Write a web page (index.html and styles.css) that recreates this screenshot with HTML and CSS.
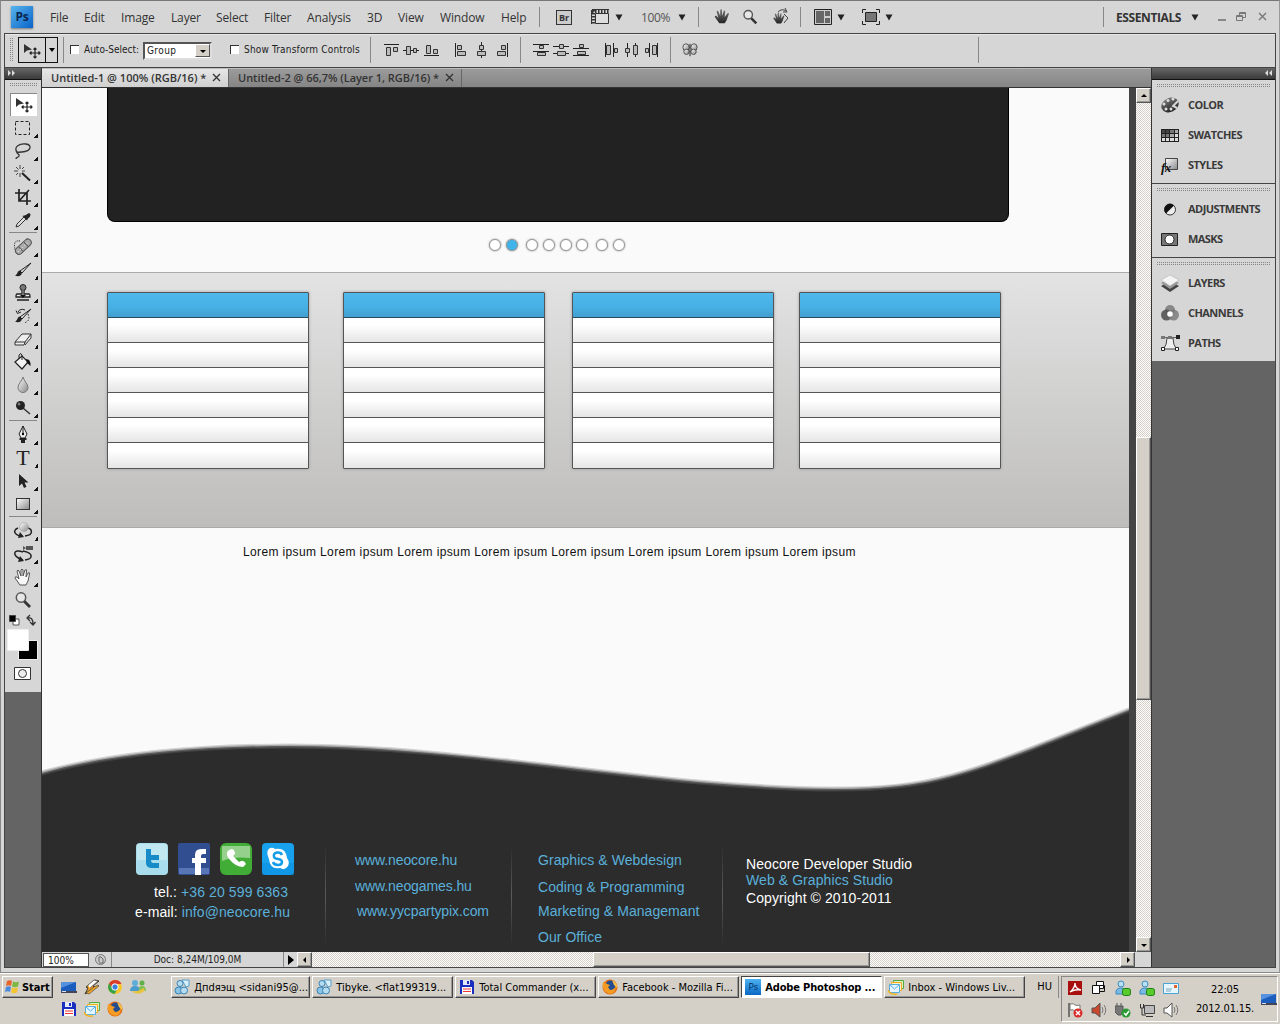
FILE: index.html
```html
<!DOCTYPE html>
<html lang="en">
<head>
<meta charset="utf-8">
<title>Adobe Photoshop</title>
<link rel="stylesheet" href="styles.css">
</head>
<body>
<svg class="defs" aria-hidden="true">
  <defs>
    <linearGradient id="metal" x1="0" y1="0" x2="1" y2="1"><stop offset="0" stop-color="#fff"/><stop offset="1" stop-color="#888"/></linearGradient>
    <linearGradient id="dark" x1="0" y1="0" x2="0" y2="1"><stop offset="0" stop-color="#777"/><stop offset="1" stop-color="#222"/></linearGradient>
  </defs>
  <symbol id="move" viewBox="0 0 20 20"><path d="M2 3v9l3-2.500 5-1z" fill="#333"/><path d="M13 7v10M8 12h10M11.500 8.500 13 7l1.500 1.500M11.500 15.500 13 17l1.500-1.500M9.500 10.500 8 12l1.500 1.500M16.500 10.500 18 12l-1.500 1.500" fill="none" stroke="#222" stroke-width="1.200"/></symbol>
  <symbol id="marquee" viewBox="0 0 20 20"><rect x="2.500" y="3.500" width="14" height="13" fill="none" stroke="#222" stroke-dasharray="3 2"/></symbol>
  <symbol id="lasso" viewBox="0 0 20 20"><path d="M4 11C0 6 7 2 13 3s5 6-1 7.500-9 0-8 1.500 3 1 2 3-3 1-3 3" fill="none" stroke="#333" stroke-width="1.300"/></symbol>
  <symbol id="wand" viewBox="0 0 20 20"><path d="M9 9l8 7.500" stroke="#222" stroke-width="2"/><path d="M7 1v4M7 9v4M1 7h4M9 7h3M3 3l2.500 2.500M11 3 9 5M3 11l2-2" stroke="#444"/></symbol>
  <symbol id="crop" viewBox="0 0 20 20"><path d="M6 2v12h12M2 6h12v12M6 14 16 3" fill="none" stroke="#222" stroke-width="1.700"/></symbol>
  <symbol id="dropper" viewBox="0 0 20 20"><path d="M3 17l1-3 7-7 2 2-7 7z" fill="#ddd" stroke="#333"/><path d="M9.500 6l4.500 4.500 1-2c4-2 3-8-2-3.500z" fill="#222"/></symbol>
  <symbol id="heal" viewBox="0 0 20 20"><path d="M7 4q-6-1-5.500 5T4 14" fill="none" stroke="#111" stroke-dasharray="1 1"/><g transform="rotate(-43 10 10)"><rect x="1" y="6.500" width="19" height="7" rx="3.500" fill="#aaa" stroke="#555"/><path d="M7 7v6m7-6v6" stroke="#555"/><path d="M3 10h15" stroke="#eee" stroke-dasharray="1 2"/></g></symbol>
  <symbol id="brush" viewBox="0 0 20 20"><path d="M18 3 9 13l-2-2z" fill="#ddd" stroke="#222"/><path d="M7 10.500c-3 0-2 4-5 5 3 1.500 7 .5 7-3z" fill="#222"/></symbol>
  <symbol id="stamp" viewBox="0 0 20 20"><circle cx="10" cy="4.500" r="3" fill="#777" stroke="#222"/><path d="M9 7v4H4q-1 0-1 3h14q0-3-1-3h-5V7M4 17h12" fill="#eee" stroke="#222" stroke-width="1.300"/><path d="M7 12h6l-3 3z" fill="#111"/></symbol>
  <symbol id="history" viewBox="0 0 20 20"><path d="M18 3 9 13l-2-2z" fill="#ddd" stroke="#222"/><path d="M7 10.500c-3 0-2 4-5 5 3 1.500 7 .5 7-3z" fill="#222"/><path d="M12 4Q7 2 5 6M3 4.500l1.500 3L8 6" fill="none" stroke="#222"/><path d="M15 8q3 7-4 9" fill="none" stroke="#222" stroke-dasharray="1.500 1.500"/></symbol>
  <symbol id="eraser" viewBox="0 0 20 20"><path d="M2 13 9 5h9l-6 8zM2 13v3h9l1-3M12 16l6-7V5" fill="#eee" stroke="#333"/></symbol>
  <symbol id="bucket" viewBox="0 0 20 20"><path d="M2 10 9 4l6 6-6 7z" fill="#f4f4f4" stroke="#222" stroke-width="1.200"/><path d="M13 7q5 0 4.500 7L14 11z" fill="#111"/><path d="M6 7V3q2-3 3 0v5" fill="none" stroke="#222"/></symbol>
  <symbol id="drop" viewBox="0 0 20 20"><path d="M10 2c1 4 5 7 5 10.500a5 5 0 0 1-10 0C5 9 9 6 10 2z" fill="url(#metal)" stroke="#777"/></symbol>
  <symbol id="dodge" viewBox="0 0 20 20"><path d="m10 10 7 6" stroke="#333" stroke-width="1.500"/><circle cx="7.500" cy="7.500" r="4.500" fill="#222"/><circle cx="6" cy="6" r="1.500" fill="#777"/></symbol>
  <symbol id="pen" viewBox="0 0 20 20"><path d="M10 1v8M10 1 6 9l2 4h4l2-4z" fill="#eee" stroke="#222"/><circle cx="10" cy="9" r="1.200"/><path d="M6.500 13h7v2h-7zM8 15h4v3H8z" fill="#222"/></symbol>
  <symbol id="select" viewBox="0 0 20 20"><path d="M6 3v12l3-2.500 2 4.500 2.500-1.200-2-4.300h4z" fill="#222"/></symbol>
  <symbol id="shape" viewBox="0 0 20 20"><rect x="3.500" y="4.500" width="13" height="11" fill="url(#metal)" stroke="#333"/></symbol>
  <symbol id="rot3d" viewBox="0 0 20 20"><path d="M5 7C-2 10 3 15 10 15m2 0c9-1 7-7 3-8" fill="none" stroke="#222" stroke-width="1.500"/><path d="m7 11 4 5-6 1z" fill="#222"/><circle cx="11" cy="6" r="4.500" fill="url(#metal)" stroke="#999" stroke-width=".5"/></symbol>
  <symbol id="cam3d" viewBox="0 0 20 20"><path d="M10 8C0 4-2 12 10 16m2 0c8-1 9-7-2-9" fill="none" stroke="#222" stroke-width="1.500"/><path d="m7 12 4 5-6 1z" fill="#222"/><path d="M13 2h7v4h-7zm0 2-3-2v4z" fill="#555"/></symbol>
  <symbol id="hand" viewBox="0 0 20 20"><path d="M7 18 2 11q0-2 2-1l2 2-2-8q1-2 2 0l2 5V3q1-2 2 0v6l2-6q2-1 1.500 1L13 10l2-4q2-1 1.500 1L15 14l-2 4z" fill="#f7f7f7" stroke="#555"/></symbol>
  <symbol id="handdark" viewBox="0 0 20 20"><path d="M7 17 2 10q0-2 2-1l2 2-2-7q1-2 2 0l2 5V2q1-1 2 0v7l2-6q2-1 1.500 1L13 10l3-4q2-1 1.500 1L15 14l-2 3z" fill="url(#dark)"/></symbol>
  <symbol id="zoom" viewBox="0 0 20 20"><path d="m11 11 6 6" stroke="#333" stroke-width="2.800"/><circle cx="8" cy="7.500" r="4.700" fill="#e7e7e7" stroke="#555" stroke-width="1.500"/></symbol>
  <symbol id="down" viewBox="0 0 8 8"><path d="M.5 1.500h7L4 7.500z" fill="#222"/></symbol>
  <symbol id="al-top" viewBox="0 0 16 16"><path d="M1 2.500h15" stroke="#222"/><path d="M3.500 5.500h4v8h-4zM10.500 5.500h4v4h-4z" fill="#bbb" stroke="#333"/></symbol>
  <symbol id="al-mid" viewBox="0 0 16 16"><path d="M0 8.500h16" stroke="#222"/><path d="M3.500 4.500h4v8h-4zM10.500 6.500h3v4h-3z" fill="#bbb" stroke="#333"/></symbol>
  <symbol id="al-bot" viewBox="0 0 16 16"><path d="M1 13.500h15" stroke="#222"/><path d="M3.500 3.500h4v8h-4zM10.500 7.500h4v4h-4z" fill="#bbb" stroke="#333"/></symbol>
  <symbol id="al-left" viewBox="0 0 16 16"><path d="M2.500 1v14" stroke="#222"/><path d="M4.500 3.500h4v4h-4zM4.500 9.500h8v4h-8z" fill="#bbb" stroke="#333"/></symbol>
  <symbol id="al-cen" viewBox="0 0 16 16"><path d="M8.500 0v16" stroke="#222"/><path d="M6.500 3.500h4v4h-4zM4.500 9.500h8v4h-8z" fill="#bbb" stroke="#333"/></symbol>
  <symbol id="al-right" viewBox="0 0 16 16"><path d="M13.500 1v14" stroke="#222"/><path d="M7.500 3.500h4v4h-4zM3.500 9.500h8v4h-8z" fill="#bbb" stroke="#333"/></symbol>
  <symbol id="ds-top" viewBox="0 0 16 16"><path d="M0 2.500h16M0 9.500h16" stroke="#222"/><path d="M6.500 3.500h4v3h-4zM4.500 10.500h8v3h-8z" fill="#bbb" stroke="#333"/></symbol>
  <symbol id="ds-mid" viewBox="0 0 16 16"><path d="M0 4.500h16M0 11.500h16" stroke="#222"/><path d="M6.500 2.500h4v4h-4zM4.500 9.500h8v4h-8z" fill="#bbb" stroke="#333"/></symbol>
  <symbol id="ds-bot" viewBox="0 0 16 16"><path d="M0 6.500h16M0 13.500h16" stroke="#222"/><path d="M6.500 2.500h4v3h-4zM4.500 9.500h8v3h-8z" fill="#bbb" stroke="#333"/></symbol>
  <symbol id="dots-left" viewBox="0 0 16 16"><path d="M2.500 1v14M10.500 1v14" stroke="#222"/><path d="M3.500 3.500h4v9h-4zM11.500 6.500h3v4h-3z" fill="#bbb" stroke="#333"/></symbol>
  <symbol id="dots-cen" viewBox="0 0 16 16"><path d="M3.500 1v14M11.500 1v14" stroke="#222"/><path d="M1.500 6.500h4v4h-4zM9.500 3.500h4v9h-4z" fill="#bbb" stroke="#333"/></symbol>
  <symbol id="dots-right" viewBox="0 0 16 16"><path d="M5.500 1v14M13.500 1v14" stroke="#222"/><path d="M1.500 6.500h3v4h-3zM8.500 3.500h4v9h-4z" fill="#bbb" stroke="#333"/></symbol>
  <symbol id="auto" viewBox="0 0 18 16"><ellipse cx="4.500" cy="5" rx="3.500" ry="4" fill="url(#metal)" stroke="#444"/><ellipse cx="13.500" cy="5" rx="3.500" ry="4" fill="url(#metal)" stroke="#444"/><ellipse cx="5" cy="10" rx="3" ry="3" fill="url(#metal)" stroke="#444"/><ellipse cx="13" cy="10" rx="3" ry="3" fill="url(#metal)" stroke="#444"/><path d="M9 1v14" stroke="#111"/></symbol>
  <symbol id="msn" viewBox="0 0 16 16"><path d="M8 1h7v6l-3 1z" fill="#d8effa" stroke="#589fc8"/><circle cx="6" cy="4.500" r="3" fill="#b6dcf1" stroke="#3982b4"/><circle cx="4.500" cy="11.500" r="3.500" fill="#8bc4e5" stroke="#3982b4"/><circle cx="10" cy="11.500" r="3.500" fill="#b6dcf1" stroke="#3982b4"/></symbol>
  <symbol id="save" viewBox="0 0 16 16"><path d="M1 1h12l2 2v12H1z" fill="#1a2fc0"/><path d="M4 1h7v5H4z" fill="#e4e8fa"/><path d="M8 2h2v3H8z" fill="#1a2fc0"/><path d="M3 8h10v7H3z" fill="#fff"/><path d="M4 10h8m-8 2.500h8" stroke="#e33"/></symbol>
  <symbol id="fox" viewBox="0 0 16 16"><circle cx="8" cy="8" r="7.500" fill="#e56b10"/><circle cx="8.500" cy="6.500" r="5" fill="#244d91"/><path d="M1 3q3 1 4 2l3 1-2 2 2 3q4 0 6-4 0 7-6 8Q-1 13 1 3z" fill="#f49c23"/><path d="M10 1q6 3 5 8l-3-3z" fill="#f6c34a"/></symbol>
  <symbol id="mail" viewBox="0 0 16 16"><path d="M5.500 1.500h10v8h-10z" fill="#d9f3c2" stroke="#54a940"/><path d="M3.500 3.500h10v8h-10z" fill="#fff3c4" stroke="#f2a922"/><path d="M1.500 5.500h10v8h-10z" fill="#e5f5ff" stroke="#59aee0"/><path d="m2 6 4.500 4L11 6" fill="none" stroke="#59aee0"/><path d="M0 11q2 5 9 4" fill="none" stroke="#f2b522" stroke-width="1.500"/></symbol>
  <symbol id="desktop" viewBox="0 0 16 16"><path d="M0 3h15v10H0z" fill="#1b5dbd"/><path d="M0 3h15L0 9z" fill="#5591dd"/><path d="M0 12h16v2H0z" fill="#445"/><path d="M1 12h4v1H1z" fill="#dde"/></symbol>
  <symbol id="bolt" viewBox="0 0 16 16"><path d="M11 1 2 8l2 1-3 6 10-7-2-1 6-5z" fill="#f5a623" stroke="#333"/><path d="m4 6 6-5 4 1-8 7" fill="#fff" stroke="#444" stroke-width=".7"/><path d="m10 8 4-2 1 1-10 8-3-1z" fill="#f5a623" stroke="#444" stroke-width=".7"/></symbol>
  <symbol id="chrome" viewBox="0 0 16 16"><circle cx="8" cy="8" r="7" fill="#f6c62b"/><path d="M2 4.500A7 7 0 0 1 14.500 5H8L5 9.500z" fill="#dc3c2c"/><path d="M2 4.500A7 7 0 0 0 7.500 15l3-5H6z" fill="#36a347"/><circle cx="8" cy="8" r="3.200" fill="#3b80dc" stroke="#fff"/></symbol>
  <symbol id="people" viewBox="0 0 16 16"><circle cx="5" cy="4" r="3" fill="#5daed9"/><circle cx="12" cy="4" r="2.500" fill="#60b04a"/><path d="M0 12q0-5 5-5t6 5z" fill="#4a9ccf"/><path d="M9 12q-1-5 3-5t4 5z" fill="#7fc054"/><path d="M1 12q8 6 14-1l-2-2q-4 4-12 3z" fill="#e7c33e"/></symbol>
  <symbol id="buddy" viewBox="0 0 16 16"><circle cx="6" cy="4" r="3" fill="#b9dff5" stroke="#3b8bc0"/><path d="M1 14q-1-6 5-6t5 6z" fill="#79b9e2" stroke="#3b8bc0"/><rect x="7.500" y="8.500" width="8" height="7" rx="2" fill="#58cc2c" stroke="#1c7d14"/></symbol>
  <symbol id="speaker" viewBox="0 0 16 16"><path d="M1 6h3l5-5v14l-5-4H1z" stroke="#555"/><path d="M11 5q2 3 0 6m2-8q3.500 5 0 10" fill="none" stroke="#777"/></symbol>
</svg>

<div class="window">
  <div class="menubar">
    <span class="logo">Ps</span>
    <span>File</span><span>Edit</span><span>Image</span><span>Layer</span><span>Select</span><span>Filter</span><span>Analysis</span><span>3D</span><span>View</span><span>Window</span><span>Help</span>
    <i class="vsep"></i>
    <span class="bridge">Br</span>
    <svg width="19" height="16"><path d="M4.500 4.500h13v10h-13z" fill="#ddd" stroke="#333"/><path d="M1 .5h17M.5 1v14" stroke="#333"/><path d="M1 2.500h17M2.500 1v14" stroke="#333" stroke-width="3" stroke-dasharray="1.500 1.500"/></svg>
    <svg class="arrow"><use href="#down"/></svg>
    <span class="zoomlevel">100%</span>
    <svg class="arrow"><use href="#down"/></svg>
    <i class="vsep"></i>
    <svg width="18" height="18"><use href="#handdark"/></svg>
    <svg width="18" height="18"><use href="#zoom"/></svg>
    <svg width="18" height="18"><use href="#handdark" x="0" y="3" width="14" height="15"/><path d="M6 4q4-4 8-1m-1-3 2 4-4 0M12 6l4 4-4 5" fill="none" stroke="#444"/></svg>
    <i class="vsep"></i>
    <svg width="18" height="16"><path d="M.5.500h17v15H.5z" fill="#ccc" stroke="#222"/><path d="M2 2h8v12H2zM11 2h5v5h-5zM11 9h5v5h-5z" fill="#666"/></svg>
    <svg class="arrow"><use href="#down"/></svg>
    <svg width="18" height="16"><path d="M.5 4V.5H4M14 .5h3.500V4M.5 12v3.500H4M14 15.500h3.500V12" fill="none" stroke="#222"/><path d="M3.500 3.500h11v9h-11z" fill="#777" stroke="#222"/></svg>
    <svg class="arrow"><use href="#down"/></svg>
    <i class="vsep"></i>
    <b class="workspace">ESSENTIALS</b>
    <svg class="arrow"><use href="#down"/></svg>
    <svg width="10" height="12"><path d="M1 9h8" stroke="#888" stroke-width="2"/></svg>
    <svg width="11" height="12"><path d="M3.500 4V1.500h6v5H7M3.500 2.500h6M.5 4.500h6v5h-6zM.5 5.500h6" fill="none" stroke="#777"/></svg>
    <svg width="11" height="12"><path d="m2 2 7 7M9 2 2 9" stroke="#777" stroke-width="1.400"/></svg>
  </div>

  <div class="options">
    <i class="grip-v"></i>
    <div class="preset"><svg width="26" height="26" viewBox="-3 -3 26 26"><use href="#move" width="20" height="20"/></svg><svg width="12" height="24"><path d="M3 10h6l-3 4z"/></svg></div>
    <i class="vsep"></i>
    <i class="check"></i><span class="auto">Auto-Select:</span>
    <div class="dropdown"><span>Group</span><b><svg width="8" height="8"><path d="M1 3h6L4 6z"/></svg></b></div>
    <i class="check"></i><span class="transform">Show Transform Controls</span>
    <i class="vsep"></i>
    <svg><use href="#al-top"/></svg><svg><use href="#al-mid"/></svg><svg><use href="#al-bot"/></svg><svg><use href="#al-left"/></svg><svg><use href="#al-cen"/></svg><svg><use href="#al-right"/></svg>
    <i class="vsep"></i>
    <svg><use href="#ds-top"/></svg><svg><use href="#ds-mid"/></svg><svg><use href="#ds-bot"/></svg><svg><use href="#dots-left"/></svg><svg><use href="#dots-cen"/></svg><svg><use href="#dots-right"/></svg>
    <i class="vsep"></i>
    <svg><use href="#auto"/></svg>
    <i class="vsep"></i>
  </div>

  <div class="work">
    <div class="tools">
      <div class="bar"><svg width="9" height="7"><path d="M1 0v6l3-3zM5 0v6l3-3z" fill="#ddd"/></svg></div>
      <div class="toolbox">
        <i class="grip-h"></i>
        <div class="tool active"><svg><use href="#move"/></svg></div>
        <div class="tool more"><svg><use href="#marquee"/></svg></div>
        <div class="tool more"><svg><use href="#lasso"/></svg></div>
        <div class="tool more"><svg><use href="#wand"/></svg></div>
        <div class="tool more"><svg><use href="#crop"/></svg></div>
        <div class="tool more"><svg><use href="#dropper"/></svg></div>
        <hr>
        <div class="tool more"><svg><use href="#heal"/></svg></div>
        <div class="tool more"><svg><use href="#brush"/></svg></div>
        <div class="tool more"><svg><use href="#stamp"/></svg></div>
        <div class="tool more"><svg><use href="#history"/></svg></div>
        <div class="tool more"><svg><use href="#eraser"/></svg></div>
        <div class="tool more"><svg><use href="#bucket"/></svg></div>
        <div class="tool more"><svg><use href="#drop"/></svg></div>
        <div class="tool more"><svg><use href="#dodge"/></svg></div>
        <hr>
        <div class="tool more"><svg><use href="#pen"/></svg></div>
        <div class="tool more type">T</div>
        <div class="tool more"><svg><use href="#select"/></svg></div>
        <div class="tool more"><svg><use href="#shape"/></svg></div>
        <hr>
        <div class="tool more"><svg><use href="#rot3d"/></svg></div>
        <div class="tool more"><svg><use href="#cam3d"/></svg></div>
        <div class="tool more"><svg><use href="#hand"/></svg></div>
        <div class="tool"><svg><use href="#zoom"/></svg></div>
        <svg class="swatches" width="36" height="81" viewBox="5 611 36 81"><path d="M13 619h6v6h-6z" fill="#fff" stroke="#555"/><path d="M9.500 615.500h6v6h-6z" stroke="#444"/><path d="M28 618q5-1 5 6M30 615l-3 3 3 3M30 622l3 3 2.500-3" fill="none" stroke="#333" stroke-width="1.300"/><path d="M18.500 640.500h19v19h-19z" stroke="#eee"/><path d="M7.500 629.500h21v21h-21z" fill="#fff" stroke="#eee"/><path d="M14.500 667.500h16v12h-16z" fill="#fff" stroke="#333"/><circle cx="22.500" cy="673.500" r="4" fill="#eee" stroke="#333"/></svg>
      </div>
    </div>

    <div class="center">
      <div class="tabs">
        <div class="tab current"><span>Untitled-1 @ 100% (RGB/16) *</span><svg width="9" height="9"><path d="m1 1 7 7M8 1 1 8" stroke="#333" stroke-width="1.300"/></svg></div>
        <div class="tab second"><span>Untitled-2 @ 66,7% (Layer 1, RGB/16) *</span><svg width="9" height="9"><path d="m1 1 7 7M8 1 1 8" stroke="#333" stroke-width="1.300"/></svg></div>
      </div>
      <div class="view">
        <div class="page">
          <div class="banner"></div>
          <div class="pager"><i></i><i class="on"></i><i class="gap"></i><i></i><i></i><i></i><i class="gap"></i><i></i></div>
          <div class="band">
            <div class="list"><b></b><i></i><i></i><i></i><i></i><i></i><i></i></div>
            <div class="list"><b></b><i></i><i></i><i></i><i></i><i></i><i></i></div>
            <div class="list"><b></b><i></i><i></i><i></i><i></i><i></i><i></i></div>
            <div class="list"><b></b><i></i><i></i><i></i><i></i><i></i><i></i></div>
          </div>
          <p class="lorem">Lorem ipsum Lorem ipsum Lorem ipsum Lorem ipsum Lorem ipsum Lorem ipsum Lorem ipsum Lorem ipsum</p>
          <svg class="wave" width="1087" height="100"><path d="M0 73C70 53 160 46 248 46C430 46 620 89 793 89C900 89 930 72 1087 10V100H0z" fill="#2c2c2c"/><g fill="none" stroke="#777"><path d="M-4 74C70 53 160 46 248 46C430 46 620 89 793 89C900 89 930 72 1092 8" stroke-opacity=".3" stroke-width="5"/><path d="M-4 74C70 53 160 46 248 46C430 46 620 89 793 89C900 89 930 72 1092 8" stroke-opacity=".5" stroke-width="2.500"/></g></svg>
          <div class="footer">
            <div class="contact">
              <div class="social">
                <svg viewBox="0 0 32 32"><rect width="32" height="32" rx="4" fill="#a9dcec"/><path d="M1 1h30v16H1z" fill="#d2eef5" opacity=".6"/><path d="M10 6v14q0 5 6 5h7v-5h-6q-2 0-2-3h8v-5h-8V6z" fill="#168bc8"/></svg>
                <svg viewBox="0 0 32 32"><rect width="32" height="32" rx="2" fill="#314e91"/><path d="M1 25h30v6H1z" fill="#5876b6"/><path d="M17 32V20h-3v-5h3v-3q0-6 6-6h5v5h-3q-2 0-2 2v2h5v5h-5v12z" fill="#fff"/></svg>
                <svg viewBox="0 0 32 32"><rect width="32" height="32" rx="6" fill="#42ad36"/><path d="M2 3h28v12Q14 13 2 18z" fill="#b2dcaa" opacity=".75"/><path d="M9 7q-5 3 1 10t13 7l3-3q-2-4-5-3l-2 1-6-6 2-2q0-4-3-5z" fill="#fff"/></svg>
                <svg viewBox="0 0 32 32"><rect width="32" height="32" rx="4" fill="#18a1ed"/><path d="M0 20h32v12H0z" fill="#078ddd" opacity=".5"/><path d="M8 5q3-1 5 1 11-2 12 9 3 4 1 8-3 5-8 2Q8 27 7 16 3 8 8 5z" fill="#fff"/><path d="M20 12q-1-3-5-2.500-4 1-3 4 0 2 4 2.500t4 3q0 3-4 3t-5-3" fill="none" stroke="#159ce8" stroke-width="2.500"/></svg>
              </div>
              <p class="tel">tel.: <a>+36 20 599 6363</a></p>
              <p class="email">e-mail: <a>info@neocore.hu</a></p>
            </div>
            <i class="rule"></i>
            <div class="sites"><a>www.neocore.hu</a><a>www.neogames.hu</a><a class="third">www.yycpartypix.com</a></div>
            <i class="rule"></i>
            <div class="services"><a>Graphics &amp; Webdesign</a><a>Coding &amp; Programming</a><a>Marketing &amp; Managemant</a><a>Our Office</a></div>
            <i class="rule"></i>
            <div class="about"><span>Neocore Developer Studio</span><a>Web &amp; Graphics Studio</a><span>Copyright © 2010-2011</span></div>
          </div>
        </div>
        <div class="scroll-v"><i class="btn"><svg width="8" height="8"><path d="M1 5h6L4 2z"/></svg></i><i class="thumb"></i><i class="btn"><svg width="8" height="8"><path d="M1 3h6L4 6z"/></svg></i></div>
      </div>
      <div class="status">
        <span class="pct">100%</span>
        <span class="info"><svg width="13" height="13"><circle cx="6.500" cy="6.500" r="5" fill="#ccc" stroke="#777"/><path d="M5 9V4h2l2 2v4H5" fill="none" stroke="#666"/></svg></span>
        <span class="doc">Doc: 8,24M/109,0M</span>
        <span class="play"><svg width="8" height="12"><path d="M1 1v10l6-5z"/></svg></span>
        <i class="btn"><svg width="8" height="8"><path d="M5 1v6L2 4z"/></svg></i>
        <div class="track"><i class="thumb"></i></div>
        <i class="btn"><svg width="8" height="8"><path d="M3 1v6l3-3z"/></svg></i>
      </div>
    </div>

    <div class="panels">
      <div class="bar"><svg width="9" height="7"><path d="M4 0v6L1 3zM8 0v6L5 3z" fill="#ddd"/></svg></div>
      <div class="group"><i class="grip-h"></i>
        <div class="item"><svg><ellipse cx="10" cy="10" rx="9" ry="7" fill="url(#dark)" transform="rotate(-25 10 10)"/><path d="m18 6-5 5 4 2" fill="none" stroke="#d6d6d6" stroke-width="2"/><g fill="#ddd"><circle cx="4" cy="9" r="1.500"/><circle cx="8" cy="5.500" r="1.500"/><circle cx="13" cy="4" r="1.500"/><circle cx="6" cy="14" r="1.500"/><circle cx="11" cy="14" r="1.500"/></g></svg><span>COLOR</span></div>
        <div class="item"><svg><path d="M1 4h18v13H1z" fill="#222"/><path d="M2 5h3v3H2zM6 5h3v3H6z" fill="#444"/><path d="M10 5h4v3h-4zM2 9h3v3H2zM6 9h3v3H6z" fill="#777"/><path d="M15 5h3v3h-3zM10 9h4v3h-4z" fill="#aaa"/><path d="M15 9h3v3h-3zM2 13h3v3H2zM6 13h3v3H6zM10 13h4v3h-4zM15 13h3v3h-3z" fill="#ddd"/></svg><span>SWATCHES</span></div>
        <div class="item"><svg><path d="M5.500 3.500h12v11h-12z" fill="url(#metal)" stroke="#444"/><text class="fx" x="1" y="17">fx</text></svg><span>STYLES</span></div>
      </div>
      <div class="group"><i class="grip-h"></i>
        <div class="item"><svg><circle cx="10" cy="10.500" r="5.500" fill="#eee" stroke="#333"/><path d="M6 14.500A5.500 5.500 0 0 1 14 6.500z" fill="#111"/></svg><span>ADJUSTMENTS</span></div>
        <div class="item"><svg><path d="M1.500 4.500h16v12h-16z" fill="#777" stroke="#222"/><circle cx="9.500" cy="10.500" r="4.500" fill="#fff" stroke="#222"/></svg><span>MASKS</span></div>
      </div>
      <div class="group last"><i class="grip-h"></i>
        <div class="item"><svg><path d="m1 13 9-5 9 5-9 6z" fill="#444"/><path d="m1 10 9-5 9 5-9 6z" fill="#999"/><path d="m1 7 9-5 9 5-9 6z" fill="#f4f4f4" stroke="#aaa" stroke-width=".5"/></svg><span>LAYERS</span></div>
        <div class="item"><svg><circle cx="10" cy="7" r="5" fill="#888"/><circle cx="6.500" cy="12" r="5.500" fill="#555" opacity=".9"/><circle cx="13.500" cy="12" r="5.500" fill="#777" opacity=".8"/><circle cx="10" cy="11" r="2.800" fill="#fff"/></svg><span>CHANNELS</span></div>
        <div class="item"><svg><path d="M3.500 16Q7 12 7 5h6q0 7 3.500 11z" fill="#eee" stroke="#444"/><path d="M3 4.500h14" stroke="#666"/><path d="M1 3h4v3H1zM8 3h4v3H8z" fill="#777"/><path d="M16 2h4v4h-4z" fill="#222"/><path d="M1.500 14.500h3v3h-3zM15.500 14.500h3v3h-3z" fill="#fff" stroke="#222"/></svg><span>PATHS</span></div>
      </div>
    </div>
  </div>
</div>

<div class="taskbar">
  <div class="start"><svg width="16" height="16"><path d="M2 2q3-1.500 5 0L6 7Q4 5.500 1 7z" fill="#e8622c"/><path d="M8 2.500q3 1.500 6 0l-1 5q-3 1.500-6 0z" fill="#7db843"/><path d="M1 8q3-1.500 5 0l-1 5q-2-1.500-5 0z" fill="#4a8be0"/><path d="M7 8.500q3 1.500 6 0l-1 5q-3 1.500-6 0z" fill="#f4c430"/></svg>Start</div>
  <div class="quick">
    <svg><use href="#desktop"/></svg><svg><use href="#bolt"/></svg><svg><use href="#chrome"/></svg><svg><use href="#people"/></svg>
    <svg><use href="#save"/></svg><svg><use href="#mail"/></svg><svg><use href="#fox"/></svg>
  </div>
  <div class="tasks">
    <div class="task first"><svg><use href="#msn"/></svg><span>Дпdяэщ &lt;sidani95@...</span></div>
    <div class="task"><svg><use href="#msn"/></svg><span>Tibyke. &lt;flat199319...</span></div>
    <div class="task"><svg><use href="#save"/></svg><span>Total Commander (x...</span></div>
    <div class="task"><svg><use href="#fox"/></svg><span>Facebook - Mozilla Fi...</span></div>
    <div class="task pressed"><b class="ps">Ps</b><span>Adobe Photoshop ...</span></div>
    <div class="task"><svg><use href="#mail"/></svg><span>Inbox - Windows Liv...</span></div>
  </div>
  <span class="lang">HU</span>
  <div class="tray">
    <div class="icons">
      <svg><path d="M1 1h14v14H1z" fill="#a81010"/><path d="M3 12q5-4 5-9 0 6 6 7-6-1-11 2z" fill="none" stroke="#fff" stroke-width="1.300"/></svg>
      <svg><path d="M5.500 1.500h7v7h-7z" fill="#fff" stroke="#111"/><path d="M1.500 5.500h7v8h-7z" fill="#fff" stroke="#111"/><path d="M8.500 5.500h5v6h-5z" fill="none" stroke="#111"/></svg>
      <svg><use href="#buddy"/></svg><svg><use href="#buddy"/></svg>
      <svg><path d="M.5 3.500h15v10H.5z" fill="#e9f5fc" stroke="#4ba3d8"/><path d="M11 5h3v3h-3z" fill="#e8622c"/><path d="M3 9h6m-6 2h5" stroke="#7ab"/></svg>
      <svg><path d="M2 1v14" stroke="#555" stroke-width="1.500"/><path d="M3 2q4-1 5 1 2 1 5 0v6q-3 1-5 0-2-2-5-1z" fill="#fff" stroke="#777"/><circle cx="11" cy="11" r="4.500" fill="#d92b2b"/><path d="m9 9 4 4m0-4-4 4" stroke="#fff" stroke-width="1.500"/></svg>
      <svg fill="#c9472a"><use href="#speaker"/></svg>
      <svg><path d="M2 1v3M6 1v3M0 4h8v6l-2 3H3l-3-3z" stroke="#555" fill="#777"/><circle cx="11" cy="11" r="4.500" fill="#2a9a35"/><path d="m9 11 2 2 3-4" fill="none" stroke="#fff" stroke-width="1.500"/></svg>
      <svg><path d="M5.500 3.500h10v8h-10z" fill="#bbb" stroke="#444"/><path d="M7 14.500h7M1.500 2v4h3V2M3 6v7h4" fill="none" stroke="#333"/></svg>
      <svg fill="#fff"><use href="#speaker"/></svg>
    </div>
    <div class="clock"><span>22:05</span><span>2012.01.15.</span></div>
    <svg class="peek"><use href="#desktop"/></svg>
  </div>
</div>
</body>
</html>
```
FILE: styles.css
```css
* { box-sizing: border-box; }
body { margin: 0; width: 1280px; height: 1024px; overflow: hidden; background: #d4d0c8; font-family: "Open Sans", "Noto Sans", sans-serif; color: #222; }
i { display: block; font-style: normal; }
p { margin: 0; }
svg { display: block; flex: none; overflow: hidden; }
.defs { position: absolute; width: 0; height: 0; }

.window { height: 973px; background: #d6d6d6; border-top: 1px solid #777; border-left: 1px solid #888; border-right: 1px solid #999; border-bottom: 1px solid #888; padding: 0 3px 4px; }

.menubar { height: 32px; display: grid; align-items: center; margin-left: -4px; width: 1280px; font-size: 12px; letter-spacing: -.15px; color: #333;
  grid-template-columns: 50px 34px 37px 50px 45px 48px 43px 60px 31px 42px 61px 38px 17px 35px 24px 26px 37px 20px 15px 28px 31px 28px 14px 23px 25px 23px 218px 13px 75px 26px 19px 21px 23px; }
.logo { margin-left: 11px; width: 22px; height: 22px; background: linear-gradient(135deg, #58b4ee, #0a63c8); color: #08264f; font-weight: 700; font-size: 12px; line-height: 22px; text-align: center; box-shadow: 0 1px 2px #777; }
.vsep { width: 1px; height: 20px; background: #888; }
.bridge { width: 16px; height: 15px; border: 1px solid #333; background: #ccc; font-size: 9px; font-weight: 700; line-height: 13px; text-align: center; }
.arrow { width: 8px; height: 8px; }
.zoomlevel { letter-spacing: -.35px; color: #555; }
.workspace { font-size: 12px; letter-spacing: -.4px; font-weight: 700; }

.options { height: 34px; display: grid; align-items: center; border: solid #444; border-width: 1px 1px 0; box-shadow: inset 0 1px #e8e8e8; width: 1272px; padding: 0 0 2px 4px; font: 10px "DejaVu Sans Condensed", "DejaVu Sans", sans-serif;
  grid-template-columns: 9px 45px 7px 14px 59px 87px 14px 126px 13px 20px 20px 30px 20px 21px 26px 13px 20px 20px 30px 21px 20px 26px 12px 296px 1px; }
.options > svg { width: 16px; height: 16px; }
.options .vsep { height: 26px; }
.grip-v, .grip-h { background: conic-gradient(#858585 0 25%, transparent 0) 0 0 / 2px 2px; }
.grip-v { width: 4px; height: 24px; }
.preset { width: 40px; height: 26px; display: flex; border: 1px solid #111; }
.preset svg:last-child { border-left: 1px solid #111; }
.check { width: 9px; height: 9px; background: #fff; border: solid #333; border-width: 1px 0 0 1px; }
.options span { white-space: nowrap; }
.transform { letter-spacing: .18px; }
.dropdown { width: 69px; height: 18px; margin-top: 2px; background: #fff; border: 2px solid; border-color: #555 #ddd #ddd #555; display: flex; justify-content: space-between; align-items: center; padding-left: 2px; letter-spacing: .4px; }
.dropdown b { width: 15px; height: 13px; background: #d4d0c8; border: 1px solid; border-color: #fff #555 #555 #fff; display: grid; place-items: center; }

.work { display: flex; height: 901px; border: 1px solid #444; width: 1272px; background: #646464; }
.bar { height: 12px; background: linear-gradient(#666, #3a3a3a); border-bottom: 1px solid #111; display: flex; align-items: center; padding: 0 2px; }
.grip-h { height: 4px; margin: 4px 4px 0; }

.tools { width: 37px; border-right: 1px solid #333; }
.toolbox { background: #d6d6d6; height: 612px; display: flow-root; }
.toolbox .grip-h { margin: 3px 4px 6px; }
.tool { width: 30px; height: 23px; margin-left: 3px; display: flex; align-items: center; justify-content: center; }
.tool svg { width: 20px; height: 20px; }
.tool.more { background: linear-gradient(135deg, transparent 50%, #111 50%) 26px 18px / 4px 4px no-repeat; }
.tool.active { background: #fff; width: 27px; height: 23px; margin-left: 5px; border: solid #888; border-width: 1px 0 0 1px; }
.type { font: 22px/22px "Liberation Serif", serif; }
.toolbox hr { height: 4px; margin: 0 4px; border: 0; background: linear-gradient(#888, #888) 0 1px / 100% 1px no-repeat; }

.center { width: 1109px; background: #444; }
.tabs { height: 20px; display: flex; background: linear-gradient(#9b9b9b, #858585); border-top: 1px solid #bbb; border-bottom: 1px solid #333; font-size: 11px; font-weight: 600; color: #333; }
.tab { display: flex; align-items: center; justify-content: space-between; padding: 0 7px 2px 9px; border-right: 1px solid #666; white-space: nowrap; }
.current { width: 187px; background: linear-gradient(#e6e6e6, #d0d0d0); letter-spacing: .02px; }
.second { width: 233px; letter-spacing: -.03px; }

.view { height: 864px; display: flex; justify-content: space-between; }
.page { width: 1087px; background: #fafafa; font-family: "Liberation Sans", Arial, sans-serif; }
.banner { width: 902px; height: 134px; margin-left: 65px; background: #222; border: 1px solid #000; border-top: 0; border-radius: 0 0 8px 8px; }
.pager { height: 50px; display: flex; padding: 17px 0 0 447px; gap: 4.900px; }
.pager i { width: 12px; height: 12px; border-radius: 50%; background: #fff; border: 1px solid #999; box-shadow: 0 0 2px #888; }
.pager .on { background: #40b3ea; }
.pager .gap { margin-left: 3px; }
.band { height: 256px; border: solid #aaa; border-width: 1px 0; background: linear-gradient(#e3e3e3, #bebdbc); display: flex; padding: 19px 0 0 65px; }
.list { width: 202px; height: 177px; border: 1px solid #555; border-radius: 1px; box-shadow: 0 0 3px #999; background: #eee; }
.list:nth-child(2) { margin-left: 34px; }
.list:nth-child(3) { margin-left: 27px; }
.list:nth-child(4) { margin-left: 25px; }
.list b { display: block; height: 25px; background: linear-gradient(#4fb8ec, #45aee2 65%, #429fce); border-bottom: 1px solid #234c63; }
.list i { height: 25px; background: linear-gradient(#fff 30%, #e5e5e5); border-bottom: 1px solid #555; }
.list i:last-child { border: 0; }
.lorem { height: 172px; padding: 16px 0 0 201px; font-size: 12px; line-height: 16px; letter-spacing: .365px; white-space: nowrap; color: #111; }
.footer { height: 152px; background: #2c2c2c; display: flex; color: #fff; font-size: 14px; white-space: nowrap; }
.footer a { color: #5bb0da; }
.contact { width: 283px; padding: 43px 0 0 94px; }
.social { display: flex; gap: 10px; height: 39px; }
.social svg { width: 32px; height: 32px; }
.contact p { height: 20px; line-height: 20px; margin-left: -1px; letter-spacing: .1px; }
.contact .tel { padding-left: 19px; }
.rule { width: 1px; height: 100px; margin-top: 45px; background: linear-gradient(transparent, #5c5c5c, transparent); }
.sites, .services, .about { display: grid; align-content: start; align-items: center; }
.sites { width: 185px; padding: 47px 0 0 29px; grid-template-rows: 26px 26px 24px; letter-spacing: -.1px; }
.third { padding-left: 2px; }
.services { width: 210px; padding: 47px 0 0 26px; grid-template-rows: 26px 28px 20px 32px; letter-spacing: .05px; }
.about { padding: 56px 0 0 23px; grid-template-rows: 16px 16px 20px; letter-spacing: .08px; }

.scroll-v, .track { background: repeating-conic-gradient(#fff 0 25%, #d4d0c8 0 50%) 0 0 / 2px 2px; }
.scroll-v { width: 15px; height: 864px; display: flex; flex-direction: column; justify-content: space-between; }
.btn { width: 15px; height: 15px; flex: none; display: grid; place-items: center; }
.btn, .thumb { background: #d4d0c8; border: 1px solid; border-color: #fff #555 #555 #fff; box-shadow: inset -1px -1px #999; }
.scroll-v .thumb { height: 263px; margin: 96px 0 0; }

.status { height: 15px; background: #d6d6d6; display: flex; align-items: center; width: 1109px; font: 10px/15px "DejaVu Sans Condensed", "DejaVu Sans", sans-serif; }
.pct { width: 46px; margin-left: 1px; height: 14px; background: #fff; padding-left: 4px; border: 1px solid #555; line-height: 13px; }
.info { width: 23px; height: 15px; padding: 1px 0 0 5px; border-right: 1px solid #888; }
.doc { width: 172px; text-align: center; border-right: 1px solid #888; }
.play { width: 13px; padding-left: 3px; }
.track { width: 808px; height: 15px; }
.track .thumb { width: 277px; height: 15px; margin-left: 281px; }

.panels { width: 124px; border-left: 1px solid #333; }
.panels .bar { justify-content: flex-end; }
.group { background: #d6d6d6; height: 104px; border-bottom: 1px solid #444; padding: 2px 0 0; }
.group:nth-child(3) { height: 74px; }
.group.last { height: 103px; border: 0; }
.group .grip-h { margin: 2px 4px; }
.item { height: 30px; display: flex; align-items: center; padding-left: 8px; gap: 8px; font-size: 11px; font-weight: 700; color: #3a3a3a; letter-spacing: -.55px; }
.item span { margin-top: -1px; }
.item svg { width: 20px; height: 20px; }
.fx { font: italic bold 13px "Liberation Serif", serif; fill: #111; }

.taskbar { height: 51px; display: flex; border-top: 1px solid #fff; padding: 2px 2px 0; font: 11px "DejaVu Sans Condensed", "DejaVu Sans", sans-serif; color: #000; }
.start, .task { height: 22px; border: 1px solid; border-color: #fff #444 #444 #fff; box-shadow: inset -1px -1px #999; display: flex; align-items: center; white-space: nowrap; }
.start { width: 52px; padding-left: 2px; font-weight: 700; gap: 1px; letter-spacing: -.1px; }
.quick { display: grid; grid-template: 22px 22px / repeat(4, 23px); margin-left: 8px; width: 109px; align-items: center; }
.quick svg { width: 16px; height: 16px; }
.tasks { display: flex; gap: 2px; }
.task { width: 141px; padding-left: 3px; gap: 4px; }
.task.first { width: 139px; margin-left: 2px; padding-left: 2px; }
.task svg, .icons svg, .peek { width: 16px; height: 16px; }
.pressed { background: #fff; border-color: #444 #fff #fff #444; font-weight: 700; box-shadow: none; }
.pressed span { letter-spacing: -.15px; }
.ps { width: 16px; height: 16px; background: linear-gradient(#4db3f2, #0a67c4); color: #052b60; font: 9px/16px "Open Sans", sans-serif; text-align: center; }
.lang { height: 22px; width: 34px; padding-left: 12px; line-height: 22px; border-right: 1px solid #888; }
.tray { margin-left: 2px; width: 218px; height: 46px; border: 1px solid; border-color: #888 #fff #fff #888; display: flex; align-items: center; padding-left: 5px; }
.icons { display: grid; grid-template: 22px 22px / repeat(5, 24px); align-items: center; width: 122px; }
.clock { width: 72px; display: flex; flex-direction: column; align-items: center; line-height: 19px; letter-spacing: -.15px; }
```
